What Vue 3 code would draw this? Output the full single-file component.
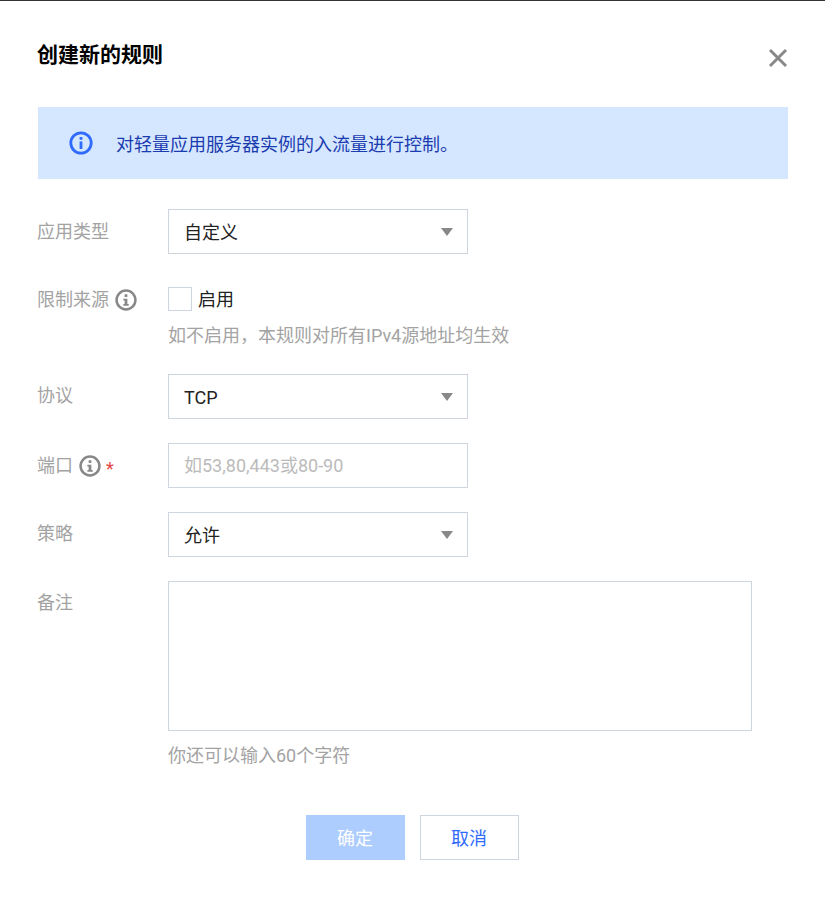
<template>
  <div class="dialog">
    <header class="dialog-head">
      <h3>创建新的规则</h3>
      <button class="close" aria-label="关闭">
        <svg width="20" height="20" viewBox="0 0 20 20">
          <path d="M2 2 L18 18 M18 2 L2 18" stroke="#888" stroke-width="3" fill="none" />
        </svg>
      </button>
    </header>

    <div class="alert">
      <svg class="alert-icon" width="24" height="24" viewBox="0 0 24 24">
        <circle cx="12" cy="12" r="10.2" stroke="#2f6bff" stroke-width="2.8" fill="none" />
        <rect x="10.6" y="6" width="2.8" height="2.8" fill="#2f6bff" />
        <rect x="10.6" y="10.4" width="2.8" height="7.6" fill="#2f6bff" />
      </svg>
      <span>对轻量应用服务器实例的入流量进行控制。</span>
    </div>

    <div class="form">
      <div class="row">
        <label class="lower-label">应用类型</label>
        <div class="select"><span>自定义</span><i class="caret"></i></div>
      </div>

      <div class="row row-check">
        <label>限制来源<svg class="tip" width="22" height="22" viewBox="0 0 21 21"><use href="#tip-icon" /></svg></label>
        <div>
          <div class="check-line"><span class="checkbox"></span><span class="check-text">启用</span></div>
          <p class="help help-check">如不启用，本规则对所有IPv4源地址均生效</p>
        </div>
      </div>

      <div class="row">
        <label>协议</label>
        <div class="select"><span>TCP</span><i class="caret"></i></div>
      </div>

      <div class="row">
        <label class="lower-label">端口<svg class="tip" width="22" height="22" viewBox="0 0 21 21"><use href="#tip-icon" /></svg><em>*</em></label>
        <div class="select placeholder"><span>如53,80,443或80-90</span></div>
      </div>

      <div class="row">
        <label>策略</label>
        <div class="select"><span>允许</span><i class="caret"></i></div>
      </div>

      <div class="row row-note">
        <label>备注</label>
        <div>
          <div class="textarea"></div>
          <p class="help help-note">你还可以输入60个字符</p>
        </div>
      </div>
    </div>

    <footer class="actions">
      <button class="btn primary">确定</button>
      <button class="btn">取消</button>
    </footer>

    <svg width="0" height="0" class="defs">
      <defs>
        <g id="tip-icon">
          <circle cx="10.5" cy="10.5" r="9" stroke="#888" stroke-width="2.4" fill="none" />
          <rect x="9.2" y="5" width="2.6" height="2.6" fill="#888" />
          <path d="M8 9.2h3.8v5.2h1.3v1.7H8v-1.7h1.2v-3.5H8z" fill="#888" />
        </g>
      </defs>
    </svg>
  </div>
</template>

<script setup>
</script>

<style>
html,
body {
  margin: 0;
  background: #fff;
}
</style>

<style scoped>
.dialog {
  box-sizing: border-box;
  width: 825px;
  height: 898px;
  padding: 0 37px 0 38px;
  border-top: 1px solid #333;
  background: #fff;
  color: #222;
  font-family: Roboto, "Noto Sans CJK SC", sans-serif;
  font-size: 18px;
  overflow: hidden;
}

.dialog-head {
  display: flex;
  justify-content: space-between;
  align-items: flex-start;
  height: 106px;
}

h3 {
  margin: 39px 0 0 -1px;
  color: #000;
  font-size: 21px;
  font-weight: 700;
  line-height: 30px;
}

.close {
  margin: 47px 0 0 0;
  padding: 0;
  border: 0;
  background: none;
  width: 20px;
  height: 20px;
}

.alert {
  display: flex;
  align-items: center;
  gap: 23px;
  height: 72px;
  padding-left: 31px;
  background: #d5e7ff;
  color: #1b3bb0;
}

.alert-icon {
  flex: none;
}

.form {
  margin-top: 30px;
}

.row {
  display: flex;
  margin-bottom: 24px;
}

label {
  display: flex;
  align-items: flex-start;
  box-sizing: border-box;
  flex: none;
  width: 130px;
  margin-left: -1px;
  margin-right: 1px;
  padding-top: 9px;
  color: #a3a3a3;
  line-height: 26px;
}

.lower-label {
  padding-top: 10px;
}

.tip {
  margin: 2px 0 0 6px;
  flex: none;
}

label em {
  margin-left: 5px;
  margin-top: 1px;
  color: #e54545;
  font-style: normal;
  line-height: 30px;
}

.select {
  display: flex;
  align-items: center;
  justify-content: space-between;
  box-sizing: border-box;
  width: 300px;
  height: 45px;
  padding: 2px 14px 0 15px;
  border: 1px solid #cfd5de;
  line-height: 45px;
}

.placeholder {
  padding-top: 0;
  color: #bbb;
}

.caret {
  width: 0;
  height: 0;
  margin-top: -2px;
  border-left: 6.5px solid transparent;
  border-right: 6.5px solid transparent;
  border-top: 8px solid #888;
}

.check-line {
  display: flex;
  align-items: center;
  gap: 6px;
  height: 24px;
  margin-top: 9px;
}

.check-text {
  margin-bottom: 2px;
}

.checkbox {
  box-sizing: border-box;
  width: 24px;
  height: 24px;
  border: 1px solid #cfd5de;
}

.help {
  margin: 0;
  color: #a3a3a3;
  line-height: 26px;
}

.help-check {
  margin-top: 12px;
}

.row-check {
  margin-bottom: 25px;
}

.row-note {
  margin-bottom: 0;
}

.textarea {
  box-sizing: border-box;
  width: 584px;
  height: 150px;
  border: 1px solid #cfd5de;
}

.help-note {
  margin-top: 12px;
}

.actions {
  display: flex;
  justify-content: center;
  gap: 15px;
  margin-top: 46px;
  padding-right: 2px;
}

.btn {
  box-sizing: border-box;
  width: 99px;
  height: 45px;
  padding: 0 0 2px;
  border: 1px solid #cfd5de;
  background: #fff;
  color: #2f6bff;
  font: inherit;
}

.primary {
  border: 0;
  background: #adcdff;
  color: #fff;
}

.defs {
  position: absolute;
}
</style>
